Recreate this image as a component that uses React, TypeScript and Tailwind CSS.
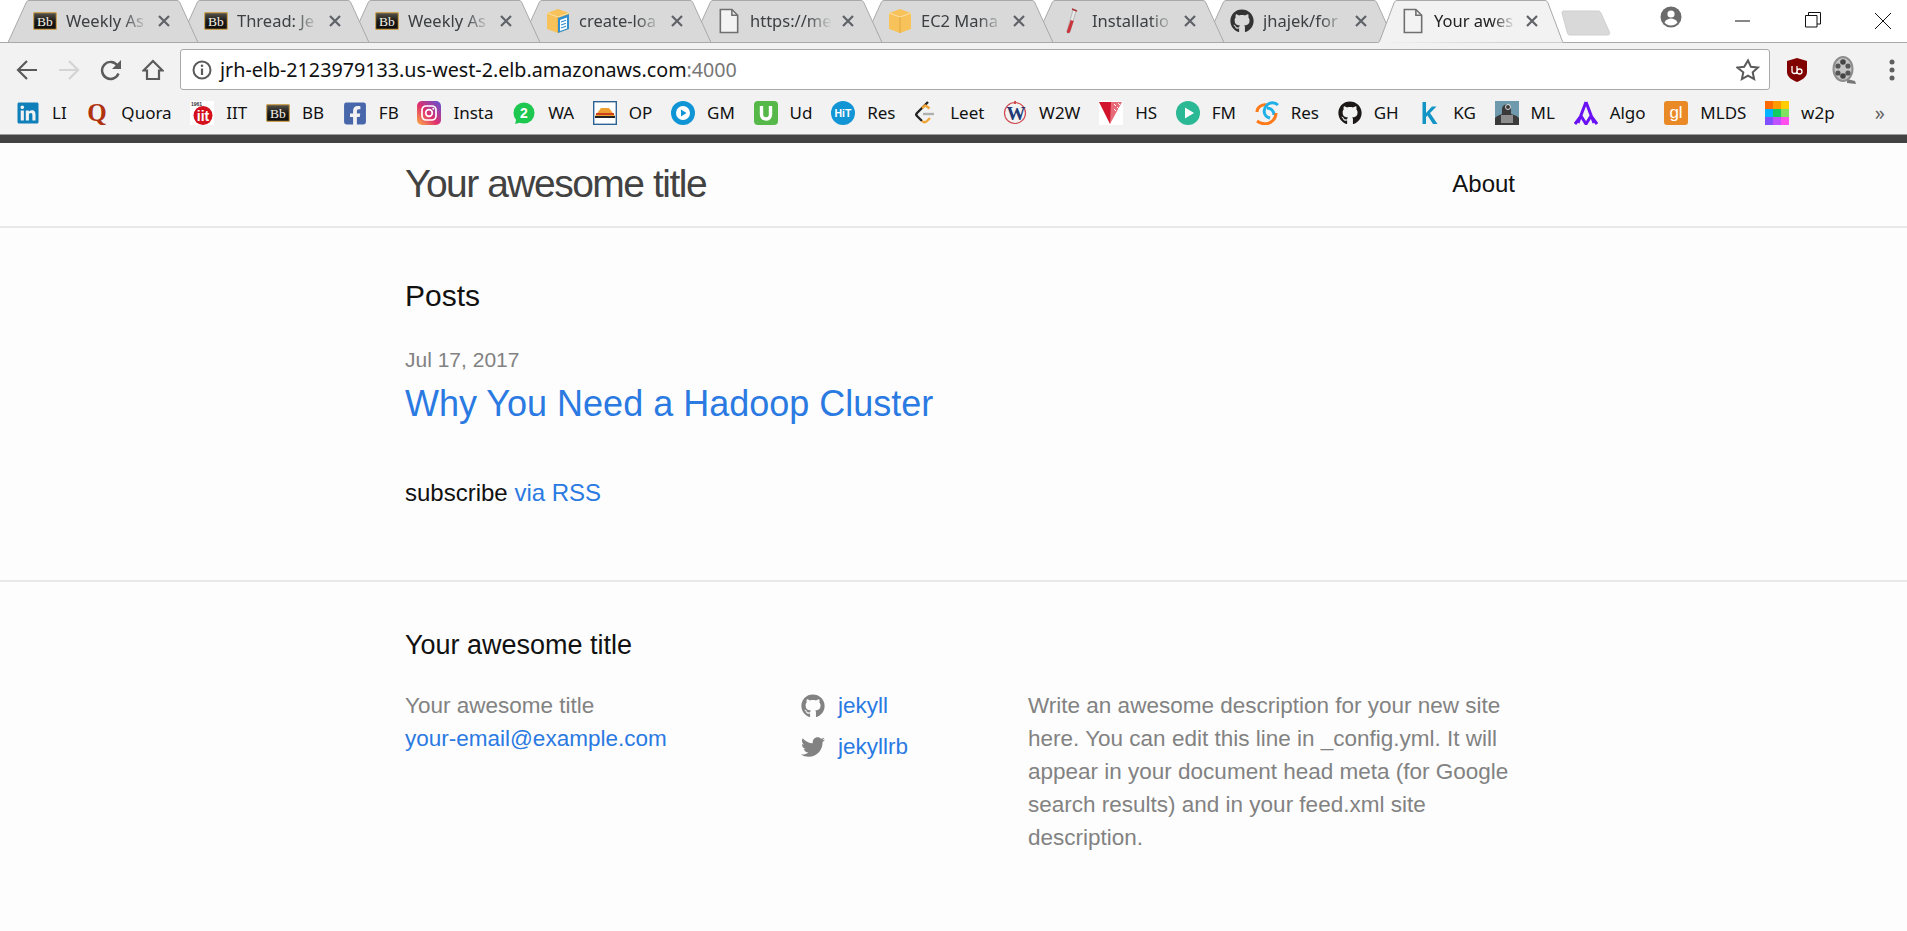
import type { ReactNode } from "react";
import { FaFacebookSquare, FaGithub, FaLinkedin, FaTwitter } from "react-icons/fa";

const ui = "font-['Noto_Sans','Open_Sans',sans-serif]";

function Bb({ w = 24 }: { w?: number }) {
  return (
    <svg width={w} height="18" viewBox="0 0 24 18" className="shrink-0">
      <defs>
        <linearGradient id="bbg" x1="0" y1="0" x2="0" y2="1">
          <stop offset="0" stopColor="#57544c" />
          <stop offset="0.5" stopColor="#1d1b18" />
          <stop offset="1" stopColor="#0d0c0a" />
        </linearGradient>
      </defs>
      <rect x="0.600" y="0.600" width="22.800" height="16.800" rx="1" fill="url(#bbg)" stroke="#c9a257" strokeWidth="1.200" />
      <text x="12" y="13.500" textAnchor="middle" fontSize="13.500" fontFamily="'Liberation Serif',serif" fill="#f4f1e6">Bb</text>
    </svg>
  );
}

function PageIcon() {
  return (
    <svg width="24" height="26" viewBox="0 0 16 18" className="shrink-0">
      <path d="M2 1h8l4 4v12H2z" fill="#f3f3f3" stroke="#6f6f6f" strokeWidth="1.100" />
      <path d="M10 1v4h4" fill="none" stroke="#6f6f6f" strokeWidth="1.100" />
    </svg>
  );
}

function BoxIcon({ doc }: { doc?: boolean }) {
  return (
    <svg width="24" height="26" viewBox="0 0 24 26" className="shrink-0">
      <path d="M12 1l11 4v16l-11 4-11-4V5z" fill="#f7c25a" />
      <path d="M1 5l11 4 11-4" fill="none" stroke="#fbe0a6" strokeWidth="1" />
      <path d="M12 9v16" stroke="#e3a63d" strokeWidth="1" />
      {doc && (
        <g>
          <path d="M12 10l11-4v15l-11 4z" fill="#2f8fd0" />
          <path d="M14 12l7-2.500v11l-7 2.500z" fill="#fff" />
          <path d="M15 14l5-1.800M15 17l5-1.800M15 20l5-1.800" stroke="#2f8fd0" strokeWidth="1.200" />
        </g>
      )}
    </svg>
  );
}

function Tube() {
  return (
    <svg width="24" height="28" viewBox="0 0 24 28" className="shrink-0">
      <path d="M14 3l3 1-6 21c-1 2-4 1-3-1z" fill="#e9e9e9" stroke="#999" strokeWidth="0.600" />
      <path d="M11.700 13l3 1-3.700 11c-1 2-4 1-3-1z" fill="#c9353a" />
      <path d="M13 2l5 2" stroke="#a33" strokeWidth="1.400" />
    </svg>
  );
}

const tabs: { title: string; icon: ReactNode; cls: string; active?: boolean }[] = [
  { title: "Weekly As", icon: <Bb />, cls: "z-[9]" },
  { title: "Thread: Je", icon: <Bb />, cls: "z-[8]" },
  { title: "Weekly As", icon: <Bb />, cls: "z-[7]" },
  { title: "create-loa", icon: <BoxIcon doc />, cls: "z-[6]" },
  { title: "https://me", icon: <PageIcon />, cls: "z-[5]" },
  { title: "EC2 Mana", icon: <BoxIcon />, cls: "z-[4]" },
  { title: "Installatio", icon: <Tube />, cls: "z-[3]" },
  { title: "jhajek/for", icon: <FaGithub className="shrink-0 text-[24px] text-[#333]" />, cls: "z-[2]" },
  { title: "Your awes", icon: <PageIcon />, cls: "z-[10]", active: true },
];

function Tab({ title, icon, cls, active }: { title: string; icon: ReactNode; cls: string; active?: boolean }) {
  return (
    <div className={`relative h-[43px] w-[171px] shrink-0 ${cls}`}>
      <svg width="190" height="43" viewBox="0 0 190 43" className="absolute left-0 top-0">
        <path
          d={
            active
              ? "M0 43L1 42.500h0c1 0 2 0 2.500-1L18 3c.6-1.400 1.600-2.500 3-2.500h148c1.400 0 2.400 1.100 3 2.500l14.500 38.500c.5 1 1.500 1 2.500 1h1"
              : "M0 42.500L18 3c.6-1.400 1.600-2.500 3-2.500h148c1.400 0 2.400 1.100 3 2.500L190 42.500z"
          }
          fill={active ? "#f2f2f2" : "#d9d9d9"}
          stroke="#a9a9a9"
          strokeWidth="1"
        />
      </svg>
      <div className="relative flex h-[42px] items-center pl-[25px]">
        <div className="flex w-[33px] shrink-0 items-center">{icon}</div>
        <span
          className={`${ui} w-[82px] whitespace-nowrap text-[16.500px] [mask-image:linear-gradient(to_right,black_70%,transparent)] ${active ? "text-[#222]" : "text-[#3c4043]"}`}
        >
          {title}
        </span>
        <svg width="14" height="14" viewBox="0 0 14 14" className="ml-[9px] shrink-0">
          <path d="M2 2l10 10M12 2L2 12" stroke="#5f6368" strokeWidth="2.200" />
        </svg>
      </div>
    </div>
  );
}

function TitleBar() {
  return (
    <div className="relative flex h-[43px] items-start bg-white pl-[8px]">
      <div className="absolute inset-x-0 bottom-0 h-px bg-[#a9a9a9]" />
      {tabs.map((t, i) => (
        <Tab key={i} {...t} />
      ))}
      <svg width="50" height="26" viewBox="0 0 50 26" className="relative ml-[14px] mt-[10px] shrink-0">
        <path
          d="M1 3C.8 1.500 1.500 1 3 1h34c1.500 0 2.200.5 2.800 1.800l8.700 19.500c.6 1.500-.2 2.700-1.800 2.700H9c-1.400 0-2.200-.6-2.600-2z"
          fill="#d9d9d9"
          stroke="#cfcfcf"
        />
      </svg>
      <div className="relative ml-[49px] mt-[6px] flex">
        <svg width="22" height="22" viewBox="0 0 22 22">
          <circle cx="11" cy="11" r="10.500" fill="#6b6b6b" />
          <circle cx="11" cy="8" r="3.600" fill="#fff" />
          <path d="M4.500 16.500c1.500-3 4-4 6.500-4s5 1 6.500 4c-1.500 2-4 3-6.500 3s-5-1-6.500-3z" fill="#fff" />
        </svg>
      </div>
      <div className="relative ml-[53px] mt-[11px] flex items-start">
        <svg width="16" height="20" viewBox="0 0 16 20">
          <path d="M0 10h15" stroke="#111" strokeWidth="1" />
        </svg>
        <svg width="16" height="20" viewBox="0 0 16 20" className="ml-[54px]">
          <path d="M.5 4.500h11.500v11.500H.5zM3.500 4.500V1.500h12v11.500h-3.500" fill="none" stroke="#111" strokeWidth="1" />
        </svg>
        <svg width="18" height="20" viewBox="0 0 18 20" className="ml-[53px]">
          <path d="M1 2l16 16M17 2L1 18" stroke="#111" strokeWidth="1" />
        </svg>
      </div>
    </div>
  );
}

function Toolbar() {
  return (
    <div className="flex h-[57px] items-center bg-[#f2f2f2] pb-[4px] pl-[16px] pr-[12px]">
      <svg width="22" height="22" viewBox="0 0 22 22" className="shrink-0">
        <path d="M21 11H2M11 2l-9 9 9 9" fill="none" stroke="#5a5a5a" strokeWidth="2.200" />
      </svg>
      <svg width="22" height="22" viewBox="0 0 22 22" className="ml-[20px] shrink-0">
        <path d="M1 11h19M11 2l9 9-9 9" fill="none" stroke="#d4d4d4" strokeWidth="2.200" />
      </svg>
      <svg width="22" height="22" viewBox="0 0 22 22" className="ml-[20px] shrink-0">
        <path d="M18.500 14.500a8.500 8.500 0 1 1-1-8" fill="none" stroke="#5a5a5a" strokeWidth="2.400" />
        <path d="M21 1v9h-9z" fill="#5a5a5a" />
      </svg>
      <svg width="22" height="22" viewBox="0 0 22 22" className="ml-[20px] shrink-0">
        <path d="M11 2L1.500 11.500H5V20h12v-8.500h3.500z" fill="none" stroke="#5a5a5a" strokeWidth="2.200" />
      </svg>
      <div className="ml-[16px] flex h-[41px] min-w-0 flex-1 items-center rounded-[3px] border border-[#a9a9a9] bg-white pl-[11px] pr-[9px]">
        <svg width="20" height="20" viewBox="0 0 20 20" className="shrink-0">
          <circle cx="10" cy="10" r="8.500" fill="none" stroke="#5a5a5a" strokeWidth="2" />
          <path d="M10 8.500V15" stroke="#5a5a5a" strokeWidth="2.200" />
          <circle cx="10" cy="5.800" r="1.300" fill="#5a5a5a" />
        </svg>
        <span className={`${ui} ml-[8px] whitespace-nowrap text-[19.700px] text-[#111]`}>
          jrh-elb-2123979133.us-west-2.elb.amazonaws.com<span className="text-[#777]">:4000</span>
        </span>
        <svg width="24" height="24" viewBox="0 0 24 24" className="ml-auto shrink-0">
          <path d="M12 2.500l2.900 6.300 6.900.8-5.100 4.700 1.400 6.800-6.100-3.400-6.100 3.400 1.400-6.800L1.300 9.600l6.900-.8z" fill="none" stroke="#5a5a5a" strokeWidth="2" />
        </svg>
      </div>
      <svg width="22" height="26" viewBox="0 0 22 26" className="ml-[16px] shrink-0">
        <path d="M11 1l10 3v11c0 5-5 8-10 10C6 23 1 20 1 15V4z" fill="#800000" />
        <path d="M6 9v5a2.500 2.500 0 0 0 5 0V9M11 14.500a2.500 2.500 0 1 0 5 0 2.500 2.500 0 0 0-5 0M11 9v8" fill="none" stroke="#fff" strokeWidth="1.300" />
      </svg>
      <svg width="26" height="30" viewBox="0 0 26 30" className="ml-[23px] shrink-0">
        <path d="M16 24l8 2 1 3-9-1z" fill="#777" />
        <ellipse cx="12" cy="14" rx="10.500" ry="13" fill="#8d8d8d" />
        <ellipse cx="12" cy="14" rx="8.500" ry="11" fill="#c4c4c4" />
        <circle cx="12" cy="7" r="2.800" fill="#444" />
        <circle cx="12" cy="21" r="2.800" fill="#444" />
        <circle cx="7" cy="11" r="2.600" fill="#555" />
        <circle cx="17" cy="11" r="2.600" fill="#555" />
        <circle cx="7" cy="18" r="2.600" fill="#555" />
        <circle cx="17" cy="18" r="2.600" fill="#555" />
      </svg>
      <svg width="6" height="24" viewBox="0 0 6 24" className="ml-[32px] shrink-0">
        <circle cx="3" cy="4" r="2.500" fill="#5f5f5f" />
        <circle cx="3" cy="12" r="2.500" fill="#5f5f5f" />
        <circle cx="3" cy="20" r="2.500" fill="#5f5f5f" />
      </svg>
    </div>
  );
}

const S = ({ children, w = 24, h = 24 }: { children: ReactNode; w?: number; h?: number }) => (
  <svg width={w} height={h} viewBox={`0 0 ${w} ${h}`} className="shrink-0">
    {children}
  </svg>
);

const serif = "'Liberation Serif',serif";
const sans = "'Liberation Sans',sans-serif";

const marks: { label: string; icon: ReactNode }[] = [
  { label: "LI", icon: <FaLinkedin className="text-[24px] text-[#0f7fba]" /> },
  {
    label: "Quora",
    icon: (
      <S>
        <text x="12" y="20" textAnchor="middle" fontSize="25" fontWeight="700" fontFamily={serif} fill="#b0330f">Q</text>
      </S>
    ),
  },
  {
    label: "IIT",
    icon: (
      <S>
        <rect width="24" height="24" fill="#fff" />
        <text x="1" y="5" fontSize="5" fontWeight="700" fontFamily={sans} fill="#333">1961</text>
        <circle cx="13" cy="14.500" r="9.500" fill="#d3101b" />
        <text x="13" y="20" textAnchor="middle" fontSize="14" fontWeight="700" fontFamily={sans} fill="#fff">iit</text>
      </S>
    ),
  },
  { label: "BB", icon: <Bb /> },
  { label: "FB", icon: <FaFacebookSquare className="text-[25px] text-[#4867aa]" /> },
  {
    label: "Insta",
    icon: (
      <S>
        <defs>
          <linearGradient id="ig" x1="0" y1="1" x2="1" y2="0">
            <stop offset="0" stopColor="#fcb045" />
            <stop offset="0.45" stopColor="#e1306c" />
            <stop offset="1" stopColor="#5b51d8" />
          </linearGradient>
        </defs>
        <rect width="24" height="24" rx="5" fill="url(#ig)" />
        <rect x="5" y="5" width="14" height="14" rx="4" fill="none" stroke="#fff" strokeWidth="1.700" />
        <circle cx="12" cy="12" r="3.300" fill="none" stroke="#fff" strokeWidth="1.700" />
        <circle cx="16.300" cy="7.700" r="1" fill="#fff" />
      </S>
    ),
  },
  {
    label: "WA",
    icon: (
      <S>
        <circle cx="12" cy="12" r="10.500" fill="#1ec74f" />
        <path d="M3 23l2-7 5 5z" fill="#1ec74f" />
        <text x="12" y="17" textAnchor="middle" fontSize="14" fontWeight="700" fontFamily={sans} fill="#fff">2</text>
      </S>
    ),
  },
  {
    label: "OP",
    icon: (
      <S>
        <rect x="0.700" y="0.700" width="22.600" height="22.600" fill="#fff" stroke="#2d6295" strokeWidth="1.400" />
        <path d="M8 7h8l6 8H2z" fill="#f0a030" />
        <path d="M3 13h18" stroke="#c73518" strokeWidth="1.800" />
        <path d="M2 15h20v2H2z" fill="#222" />
      </S>
    ),
  },
  {
    label: "GM",
    icon: (
      <S>
        <circle cx="12" cy="12" r="12" fill="#0f95d6" />
        <circle cx="12" cy="12" r="7" fill="#fff" />
        <path d="M10 8.500l5.500 3.500L10 15.500z" fill="#0f95d6" />
      </S>
    ),
  },
  {
    label: "Ud",
    icon: (
      <S>
        <rect width="24" height="24" rx="4" fill="#55b848" />
        <path d="M7.500 5v8.500c0 6 9 6 9 0V5" fill="none" stroke="#fff" strokeWidth="3.400" />
      </S>
    ),
  },
  {
    label: "Res",
    icon: (
      <S>
        <circle cx="12" cy="12" r="12" fill="#1295d4" />
        <text x="12" y="16" textAnchor="middle" fontSize="10.500" fontWeight="700" fontFamily={sans} fill="#fff">HiT</text>
      </S>
    ),
  },
  {
    label: "Leet",
    icon: (
      <S>
        <path d="M14 1L3 12c-1 1-1 2 0 3l5 5" fill="none" stroke="#222" strokeWidth="2.400" />
        <path d="M8 20c1.500 1.500 3.500 1.500 5 0l3-3" fill="none" stroke="#f0a63a" strokeWidth="2.400" />
        <path d="M8 7l3-2.500c1 0 3 2 4.500 3" fill="none" stroke="#f0a63a" strokeWidth="2.400" />
        <path d="M9 13h11" stroke="#b0b0b0" strokeWidth="2.400" />
      </S>
    ),
  },
  {
    label: "W2W",
    icon: (
      <S>
        <circle cx="12" cy="12" r="10.500" fill="none" stroke="#d04a50" strokeWidth="1.200" />
        <path d="M12 0v3" stroke="#d04a50" strokeWidth="2" />
        <text x="13" y="19" textAnchor="middle" fontSize="19" fontWeight="700" fontFamily={serif} fill="#233a75">W</text>
      </S>
    ),
  },
  {
    label: "HS",
    icon: (
      <S>
        <rect width="24" height="24" fill="#fff" />
        <path d="M0 1l12 0 2 10-3 12z" fill="#d1142c" />
        <path d="M12 1h11L11 23z" fill="#e66a78" />
        <path d="M15 3l2 2m2-3l2 2m-6 4l2 2m1-4l2 2" stroke="#fff" strokeWidth="1" />
      </S>
    ),
  },
  {
    label: "FM",
    icon: (
      <S>
        <circle cx="12" cy="12" r="12" fill="#2bb894" />
        <path d="M9 6.500l9 5.500-9 5.500z" fill="#fff" />
      </S>
    ),
  },
  {
    label: "Res",
    icon: (
      <S>
        <path d="M2 11C2 6 7 3 12 4" fill="none" stroke="#ff7a1a" strokeWidth="3" />
        <path d="M23 4c-3-3-8-3-11 0-3 3-4 8-1 11 1 1 2 1.500 4 2" fill="none" stroke="#1fb0e8" strokeWidth="3" />
        <path d="M12 7c4 0 7 3 7 7" fill="none" stroke="#1fb0e8" strokeWidth="3" />
        <path d="M2 20c4 3 10 4 14 1 3-2 5-4 5-9" fill="none" stroke="#ff7a1a" strokeWidth="3" />
      </S>
    ),
  },
  { label: "GH", icon: <FaGithub className="text-[24px] text-[#1b1817]" /> },
  {
    label: "KG",
    icon: (
      <S>
        <path d="M5.500 1v22h3.500v-7l1.500-1.500 5.500 8.500h4.500l-7.500-11 6.500-6.500h-4.500L9 12V1z" fill="#1295c4" />
      </S>
    ),
  },
  {
    label: "ML",
    icon: (
      <S>
        <rect width="24" height="24" fill="#6f99ad" />
        <path d="M0 24V17c3-3 5-3 7-4V8c0-6 9-6 9 0v5c3 1 5 1 8 4v7z" fill="#3a3a3a" />
        <rect x="6" y="14" width="12" height="8" fill="#8c8c8c" />
        <circle cx="13" cy="6" r="2.500" fill="none" stroke="#ddd" strokeWidth="1" />
      </S>
    ),
  },
  {
    label: "Algo",
    icon: (
      <S>
        <path d="M12 1L4 22M12 1l8 21M1 23l6-8 5 8 5-8 6 8" fill="none" stroke="#6a10f5" strokeWidth="3" />
      </S>
    ),
  },
  {
    label: "MLDS",
    icon: (
      <S>
        <rect width="24" height="24" rx="3" fill="#ea8a27" />
        <text x="12" y="17" textAnchor="middle" fontSize="17" fontFamily={sans} fill="#fff">gl</text>
      </S>
    ),
  },
  {
    label: "w2p",
    icon: (
      <S>
        <rect x="0" y="0" width="8" height="8" fill="#ff6a00" />
        <rect x="8" y="0" width="8" height="8" fill="#ff9a00" />
        <rect x="16" y="0" width="8" height="8" fill="#ffcc00" />
        <rect x="0" y="8" width="8" height="8" fill="#00b4ff" />
        <rect x="8" y="8" width="8" height="8" fill="#10cc60" />
        <rect x="16" y="8" width="8" height="8" fill="#80e060" />
        <rect x="0" y="16" width="8" height="8" fill="#8050ff" />
        <rect x="8" y="16" width="8" height="8" fill="#c050ff" />
        <rect x="16" y="16" width="8" height="8" fill="#ff50ee" />
      </S>
    ),
  },
];

function Bookmarks() {
  return (
    <div className="flex h-[35px] items-center gap-[18.700px] border-b border-[#9a9a9a] bg-[#f2f2f2] pb-[8px] pl-[16px] pr-[22px]">
      {marks.map((m, i) => (
        <div key={i} className="flex shrink-0 items-center gap-[12px]">
          <span className="flex h-[24px] w-[24px] items-center justify-center">{m.icon}</span>
          <span className={`${ui} whitespace-nowrap text-[17px] leading-[24px] text-[#111]`}>{m.label}</span>
        </div>
      ))}
      <span className={`${ui} ml-auto text-[20px] leading-[24px] text-[#666]`}>»</span>
    </div>
  );
}

const page = "font-['Liberation_Sans',Arial,sans-serif]";

function Page() {
  return (
    <div className={`${page} flex-1 bg-[#fdfdfd] text-[#111]`}>
      <div className="h-[8px] bg-[#424242]" />
      <header className="border-b-2 border-[#e8e8e8]">
        <div className="ml-[405px] flex h-[83px] w-[1110px] items-center justify-between pb-[1px]">
          <span className="text-[39px] tracking-[-1.500px] text-[#424242]">Your awesome title</span>
          <span className="text-[24px] text-[#111]">About</span>
        </div>
      </header>
      <main className="ml-[405px] h-[352px] w-[1110px] pt-[47px]">
        <h1 className="text-[30px] leading-[42px]">Posts</h1>
        <p className="mt-[25px] text-[21px] leading-[35px] text-[#828282]">Jul 17, 2017</p>
        <p className="text-[36px] leading-[54px] text-[#2a7ae2]">Why You Need a Hadoop Cluster</p>
        <p className="mt-[44px] text-[24px] leading-[36px]">
          subscribe <span className="text-[#2a7ae2]">via RSS</span>
        </p>
      </main>
      <footer className="border-t-2 border-[#e8e8e8] pt-[45px]">
        <div className="ml-[405px] w-[1110px]">
          <h2 className="text-[27px] leading-[36px]">Your awesome title</h2>
          <div className="mt-[26px] flex text-[22.500px] leading-[33px]">
            <div className="w-[396px] text-[#828282]">
              <div>Your awesome title</div>
              <div className="text-[#2a7ae2]">your-email@example.com</div>
            </div>
            <div className="w-[227px]">
              <div className="flex h-[33px] items-center gap-[13px] text-[#2a7ae2]">
                <FaGithub className="text-[24px] text-[#828282]" />
                <span>jekyll</span>
              </div>
              <div className="mt-[8px] flex h-[33px] items-center gap-[13px] text-[#2a7ae2]">
                <FaTwitter className="text-[24px] text-[#828282]" />
                <span>jekyllrb</span>
              </div>
            </div>
            <div className="w-[487px] text-[#828282]">
              Write an awesome description for your new site here. You can edit this line in _config.yml. It will appear in your document head meta (for Google search results) and in your feed.xml site description.
            </div>
          </div>
        </div>
      </footer>
    </div>
  );
}

export default function App() {
  return (
    <div className="flex h-[931px] flex-col overflow-hidden bg-white">
      <TitleBar />
      <Toolbar />
      <Bookmarks />
      <Page />
    </div>
  );
}
